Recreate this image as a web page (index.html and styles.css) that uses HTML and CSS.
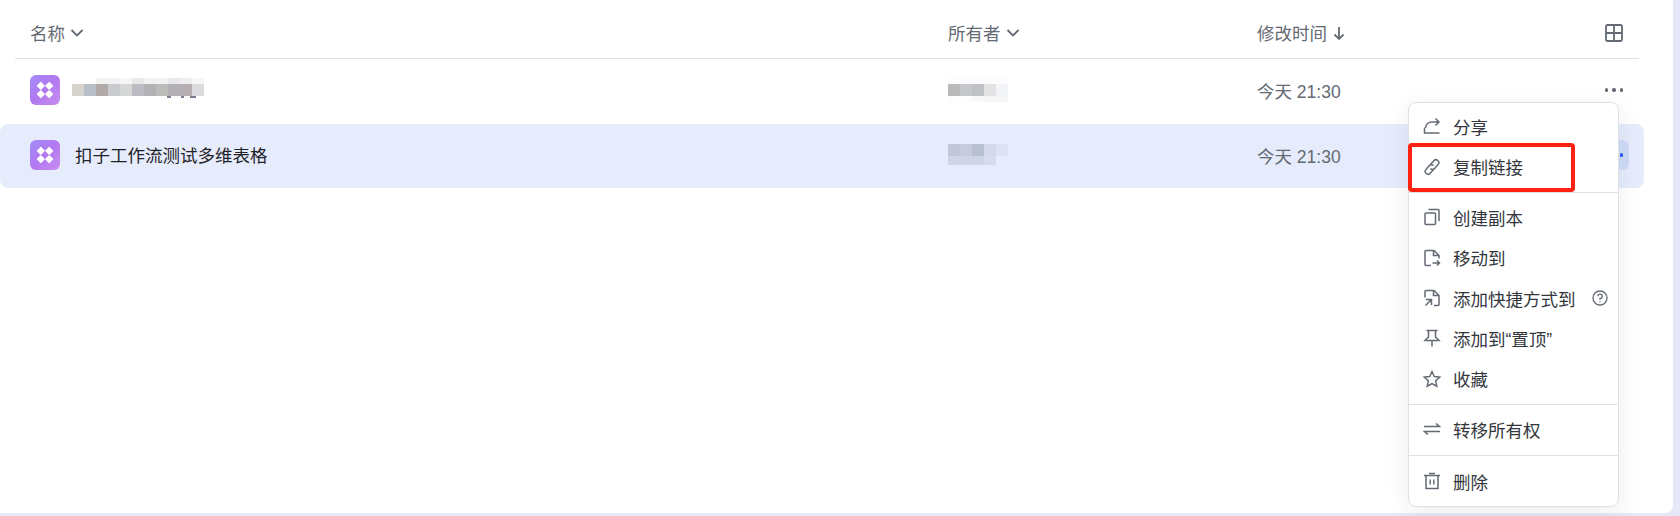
FILE: index.html
```html
<!DOCTYPE html>
<html lang="zh-CN">
<head>
    <meta charset="UTF-8">
    <meta name="viewport" content="width=device-width, initial-scale=1.0">
    <title>文档列表</title>
    <link rel="stylesheet" href="styles.css">
</head>
<body>
    <div class="panel">
        <div class="list-head">
            <div class="col-name">名称
                <svg class="head-icon" viewBox="0 0 16 16"><path d="M2.500 5l5.500 5.500L13.500 5"/></svg>
            </div>
            <div class="col-owner">所有者
                <svg class="head-icon" viewBox="0 0 16 16"><path d="M2.500 5l5.500 5.500L13.500 5"/></svg>
            </div>
            <div class="col-time">修改时间
                <svg class="head-icon" viewBox="0 0 16 16"><path d="M8 2v12M3.500 9.500L8 14l4.500-4.500"/></svg>
            </div>
            <div class="col-action">
                <svg class="grid-icon" viewBox="0 0 18 18"><rect x="1" y="1" width="16" height="16" rx="1.500"/><path d="M9 1v16M1 9h16"/></svg>
            </div>
        </div>

        <div class="row">
            <div class="col-name">
                <svg class="doc-icon" viewBox="0 0 30 30"><use href="#base-icon"/></svg>
                <div class="blur-name"></div>
            </div>
            <div class="col-owner"><div class="blur-owner"></div></div>
            <div class="col-time">今天 21:30</div>
            <div class="col-action"><div class="more"><i></i><i></i><i></i></div></div>
        </div>

        <div class="row row-active">
            <div class="col-name">
                <svg class="doc-icon" viewBox="0 0 30 30"><use href="#base-icon"/></svg>
                <span class="doc-title">扣子工作流测试多维表格</span>
            </div>
            <div class="col-owner"><div class="blur-owner blur-owner-active"></div></div>
            <div class="col-time">今天 21:30</div>
            <div class="col-action"><div class="more more-active"><i></i><i></i><i></i></div></div>
        </div>

        <div class="menu">
            <div class="menu-item">
                <svg class="menu-icon" viewBox="0 0 18 18"><path d="M1.500 10.500V16h15M2.500 11c.5-3.500 3-6 6.500-6h7M12.500 1.500L16 5l-3.500 3.500"/></svg>分享
            </div>
            <div class="menu-item">
                <svg class="menu-icon" viewBox="0 0 18 18"><path d="M7.500 6.500l3.300-3.800a2.800 2.800 0 0 1 4.200 3.800l-3.300 3.900a2.800 2.800 0 0 1-4.200 0M10.500 11.500l-3.300 3.800a2.800 2.800 0 0 1-4.200-3.800l3.300-3.900a2.800 2.800 0 0 1 4.200 0"/></svg>复制链接
            </div>
            <div class="menu-line"></div>
            <div class="menu-item">
                <svg class="menu-icon" viewBox="0 0 18 18"><rect x="2" y="5" width="10.500" height="11.500" rx="1"/><path d="M5.500 1.500H15a1 1 0 0 1 1 1V13"/></svg>创建副本
            </div>
            <div class="menu-item">
                <svg class="menu-icon" viewBox="0 0 18 18"><path d="M8 16.500H3a1 1 0 0 1-1-1v-13a1 1 0 0 1 1-1h8l5 5v3M10.500 1.500v5h5.500M9.500 14h7M14 11.500l2.500 2.500-2.500 2.500"/></svg>移动到
            </div>
            <div class="menu-item">
                <svg class="menu-icon" viewBox="0 0 18 18"><path d="M2 8.500v-6a1 1 0 0 1 1-1h8l5 5v9a1 1 0 0 1-1 1h-4M10.500 1.500v5h5.500M3 10.500h5.500V16M8.500 10.500L2.500 16.500"/></svg>添加快捷方式到
                <svg class="help-icon" viewBox="0 0 16 16"><circle cx="8" cy="8" r="7"/><path d="M5.800 6.300A2.200 2.200 0 1 1 8 8.500v1.200M8 11.300v1"/></svg>
            </div>
            <div class="menu-item">
                <svg class="menu-icon" viewBox="0 0 18 18"><path d="M3.500 1.500h11M5.500 1.500V8L2 11.500h14L12.500 8V1.500M9 11.500v6"/></svg>添加到“置顶”
            </div>
            <div class="menu-item">
                <svg class="menu-icon star-icon" viewBox="0 0 18 18"><path d="M9 1.500l2.300 5 5.400.6-4 3.700 1.100 5.400L9 13.500l-4.800 2.700 1.100-5.400-4-3.700 5.400-.6z"/></svg>收藏
            </div>
            <div class="menu-line"></div>
            <div class="menu-item">
                <svg class="menu-icon" viewBox="0 0 18 18"><path d="M1 6.500h15.500L13 3.500M17 11.500H1.500L5 14.500"/></svg>转移所有权
            </div>
            <div class="menu-line menu-line-last"></div>
            <div class="menu-item">
                <svg class="menu-icon" viewBox="0 0 18 18"><path d="M1 3.500h16M3 3.500v13h12v-13M6 1.500h6M7.200 7.500v5M10.800 7.500v5"/></svg>删除
            </div>
            <div class="red-box"></div>
        </div>
    </div>

    <svg class="defs" width="0" height="0">
        <defs>
            <linearGradient id="base-bg" x1="0" y1="0" x2="1" y2="1">
                <stop offset="0" stop-color="#a48cf8"/>
                <stop offset="0.5" stop-color="#b278f0"/>
                <stop offset="1" stop-color="#c98ff0"/>
            </linearGradient>
            <g id="base-icon">
                <rect width="30" height="30" rx="6" fill="url(#base-bg)"/>
                <g fill="#fff">
                    <rect x="7.800" y="7.800" width="6" height="6" rx="0.500" transform="rotate(45 10.800 10.800)"/>
                    <rect x="16.200" y="7.800" width="6" height="6" rx="0.500" transform="rotate(45 19.200 10.800)"/>
                    <rect x="7.800" y="16.200" width="6" height="6" rx="0.500" transform="rotate(45 10.800 19.200)"/>
                    <rect x="16.200" y="16.200" width="6" height="6" rx="0.500" transform="rotate(45 19.200 19.200)"/>
                </g>
            </g>
        </defs>
    </svg>
</body>
</html>
```

FILE: styles.css
```css
* {
    box-sizing: border-box;
}
body {
    margin: 0;
    height: 516px;
    overflow: hidden;
    background: #e5e8f6;
    font-family: "Liberation Sans", "Noto Sans CJK SC", sans-serif;
    font-size: 17.5px;
    color: #1f2329;
}
.panel {
    position: relative;
    width: 1673px;
    height: 513px;
    background: #fff;
    border-bottom-right-radius: 8px;
}
.list-head {
    display: flex;
    align-items: center;
    height: 59px;
    margin: 0 34px 0 15px;
    padding-top: 7px;
    border-bottom: 1px solid #dee0e3;
    color: #646a73;
}
.list-head .col-name {
    width: 933px;
    padding-left: 15px;
}
.list-head .col-owner {
    width: 309px;
}
.list-head .col-time {
    width: 348px;
}
.col-name, .col-owner, .col-time {
    display: flex;
    align-items: center;
}
.head-icon {
    width: 16px;
    height: 16px;
    margin-left: 4px;
    fill: none;
    stroke: #646a73;
    stroke-width: 1.8;
}
.grid-icon {
    width: 18px;
    height: 18px;
    fill: none;
    stroke: #646a73;
    stroke-width: 1.8;
}
.col-action {
    display: flex;
}
.row {
    display: flex;
    align-items: center;
    width: 1644px;
    height: 65px;
    padding-bottom: 3px;
}
.row .col-name {
    width: 948px;
    padding-left: 30px;
}
.row .col-owner {
    width: 309px;
}
.row .col-time {
    width: 342px;
    color: #646a73;
}
.row-active {
    height: 64px;
    padding-bottom: 2px;
    background: #e6ecfb;
    border-radius: 8px;
}
.doc-icon {
    width: 30px;
    height: 30px;
    margin-right: 15px;
}
.doc-title {
    padding-bottom: 2px;
    color: #1f2329;
}
.blur-name {
    width: 132px;
    height: 21px;
    margin-left: -3px;
    margin-top: -3px;
    background:
        linear-gradient(90deg, transparent 0 95px, #7b7d90 95px 99px, transparent 99px 109px, #7b7d90 109px 112px, transparent 112px 118px, #7b7d90 118px 124px, transparent 124px) 0 18px / 100% 2px no-repeat,
        linear-gradient(90deg, #d6d2cd 0 12px, #b8bfc6 12px 24px, #b0aaa8 24px 36px, #c9cbce 36px 48px, #d5d8d6 48px 60px, #bbbbc1 60px 72px, #b2b2b5 72px 84px, #bcbdbb 84px 96px, #b2afb5 96px 108px, #b5aeb0 108px 120px, #dcdcde 120px 132px) 0 6px / 100% 12px no-repeat,
        linear-gradient(90deg, #fff 0 24px, #f1f1f1 24px 48px, #f6f6f6 48px 60px, #e8e8e8 60px 72px, #f2f2f2 72px 96px, #e9e9ec 96px 108px, #eeeef0 108px 120px, #f6f6f6 120px 132px) 0 0 / 100% 6px no-repeat;
}
.blur-owner {
    width: 60px;
    height: 30px;
    background:
        linear-gradient(90deg, #b9bab9 0 12px, #c6c7cb 12px 24px, #bfc1c4 24px 36px, #e3e3e3 36px 48px, #f3f4f7 48px 60px) 0 9px / 100% 12px no-repeat,
        linear-gradient(90deg, #fdfdfd 0 24px, #f8f8f8 24px 36px, #f5f5f5 36px 60px) 0 21px / 100% 6px no-repeat,
        linear-gradient(90deg, #fcfcfc 0 60px) 0 2px / 100% 7px no-repeat;
}
.blur-owner-active {
    height: 22px;
    background:
        linear-gradient(90deg, #c1c7d6 0 12px, #c7ccdd 12px 24px, #b9c0d2 24px 36px, #d5daea 36px 48px, #dde3f3 48px 60px) 0 0 / 100% 12px no-repeat,
        linear-gradient(90deg, #d0d5e5 0 24px, #cdd4e5 24px 36px, #d7dcec 36px 48px, #e6ecfb 48px 60px) 0 12px / 100% 9px no-repeat;
}
.more {
    display: flex;
    gap: 4px;
    align-items: center;
    justify-content: center;
    width: 30px;
    height: 30px;
    border-radius: 6px;
}
.more i {
    width: 3.500px;
    height: 3.500px;
    border-radius: 50%;
    background: #646a73;
}
.more-active {
    background: #cfdcf8;
}
.more-active i {
    background: #1f5cf0;
}
/* menu opened from the second row, lies over the list */
.menu {
    position: absolute;
    left: 1408px;
    top: 102px;
    width: 211px;
    height: 405px;
    padding: 4px 0;
    background: #fff;
    border: 1px solid #dee0e3;
    border-radius: 8px;
    box-shadow: 0 6px 24px rgba(31, 35, 41, 0.08);
}
.menu-item {
    display: flex;
    align-items: center;
    height: 40.400px;
    padding-left: 14px;
    padding-bottom: 1.500px;
    color: #33373d;
}
.menu-icon {
    flex: none;
    width: 18px;
    height: 18px;
    margin-right: 12px;
    fill: none;
    stroke: #646a73;
    stroke-width: 1.500;
}
.star-icon {
    overflow: visible;
}
.help-icon {
    width: 16px;
    height: 16px;
    margin-left: 16px;
    fill: none;
    stroke: #646a73;
    stroke-width: 1.300;
}
.menu-line {
    height: 1px;
    margin: 4.500px 0;
    background: #dee0e3;
}
.menu-line-last {
    margin-bottom: 6px;
}
.red-box {
    position: absolute;
    left: -1px;
    top: 40px;
    width: 167px;
    height: 49px;
    border: 4px solid #ff2213;
    border-radius: 4px;
}
.defs {
    position: absolute;
}
```
